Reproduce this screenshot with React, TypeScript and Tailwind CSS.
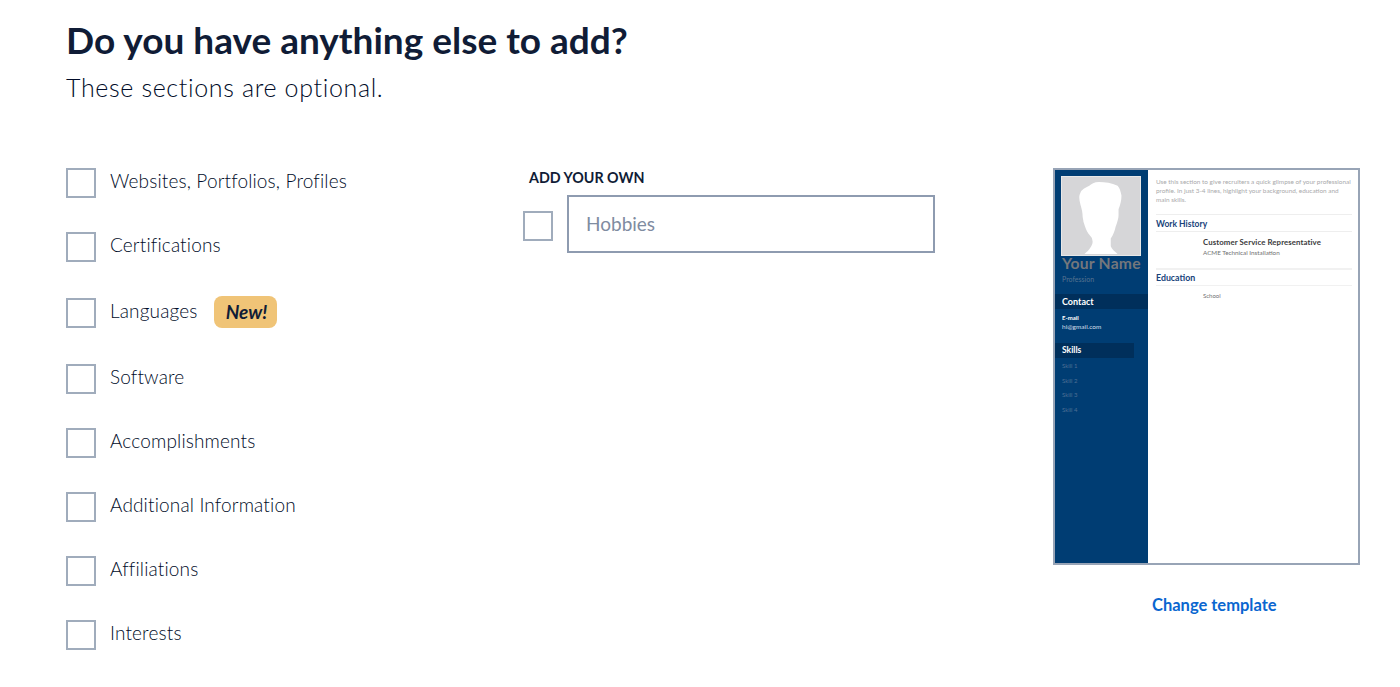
const sections = [
  { label: "Websites, Portfolios, Profiles" },
  { label: "Certifications" },
  { label: "Languages", isNew: true },
  { label: "Software" },
  { label: "Accomplishments" },
  { label: "Additional Information" },
  { label: "Affiliations" },
  { label: "Interests" },
];

function Checkbox() {
  return <div className="w-[30px] h-[30px] shrink-0 border-2 border-[#a0acbc] bg-white" />;
}

function ResumePreview() {
  return (
    <div className="w-[307px] h-[397px] border-2 border-[#98a4b6] flex bg-white font-['Lato',sans-serif] overflow-hidden">
      <div className="w-[93px] shrink-0 bg-[#003d73]">
        <div className="ml-[6px] mt-[6px] w-[80px] h-[80px] bg-[#d6d6d8] border border-[#e8e8e8]">
          <svg viewBox="0 0 80 80" className="w-full h-full">
            <path
              d="M38 5 C33 5 30 7 28 9 C24 11 20 13 19 16 C17 20 18 22 18 24 C19 30 21 34 21 38 C21 42 22 44 22 46 C24 52 25 55 27 58 C29 61 31 62 31 64 C32 67 31 69 30 71 C28 75 25 77 23 79 L57 79 C54 76 51 74 50 71 L50 63 C53 59 54 55 55 51 C57 46 58 42 58 39 L58 33 C60 28 61 24 61 19 C60 14 59 11 57 9 C51 6 44 5 38 5 Z"
              fill="#ffffff"
            />
          </svg>
        </div>
        <div className="ml-[7px] -mt-[2px] text-[15.7px] leading-[19px] font-bold tracking-[0.2px] text-[#74777c] whitespace-nowrap">Your Name</div>
        <div className="ml-[7px] mt-[1px] text-[7px] leading-[10px] text-[#56728f]">Profession</div>
        <div className="mt-[10px] h-[15px] bg-[#002f5b] pl-[7px] text-[9px] leading-[15px] font-bold text-white">Contact</div>
        <div className="ml-[7px] mt-[4px] text-[6px] leading-[9px] font-bold text-white">E-mail</div>
        <div className="ml-[7px] text-[6.5px] leading-[10px] text-[#d5dfe9]">hi@gmail.com</div>
        <div className="mt-[11px] w-[79px] h-[15px] bg-[#002f5b] pl-[7px] text-[8.5px] leading-[15px] font-bold text-white">Skills</div>
        <div className="ml-[7px] mt-[3px] flex flex-col gap-[4.6px] text-[6px] leading-[10px] text-[#4f6f93]">
          <div>Skill 1</div>
          <div>Skill 2</div>
          <div>Skill 3</div>
          <div>Skill 4</div>
        </div>
      </div>
      <div className="flex-1 pl-[8px] pr-[6px] pt-[7px]">
        <div className="text-[6.4px] leading-[9.2px] text-[#a9a9ab] whitespace-nowrap">
          <div>Use this section to give recruiters a quick glimpse of your professional</div>
          <div>profile. In just 3-4 lines, highlight your background, education and</div>
          <div>main skills.</div>
        </div>
        <div className="mt-[9px] border-t border-[#eeeeee] border-b h-[18px] text-[8.5px] leading-[18px] font-bold text-[#17427a]">Work History</div>
        <div className="ml-[47px] mt-[4px] text-[7.8px] leading-[12px] font-bold tracking-[0.1px] text-[#3a3a3c] whitespace-nowrap">Customer Service Representative</div>
        <div className="ml-[47px] text-[6.3px] leading-[10px] text-[#707072] whitespace-nowrap">ACME Technical Installation</div>
        <div className="mt-[10px] border-t-2 border-[#f1f1f1] border-b h-[18px] text-[8.8px] leading-[16px] font-bold text-[#17427a]">Education</div>
        <div className="ml-[47px] mt-[5px] text-[6px] leading-[10px] text-[#707072]">School</div>
      </div>
    </div>
  );
}

export default function App() {
  return (
    <div className="w-[1400px] h-[687px] bg-white overflow-hidden pl-[66px] pt-[15px] font-['Lato',sans-serif] text-[#101c36]">
      <h1 className="text-[37px] leading-[50px] font-bold whitespace-nowrap">Do you have anything else to add?</h1>
      <p className="mt-[4px] text-[25px] leading-[36px] font-light tracking-[0.65px] text-[#000b28]">These sections are optional.</p>

      <div className="flex mt-[63px]">
        <div className="w-[457px] shrink-0 flex flex-col gap-[34px]">
          {sections.map((s) => (
            <div key={s.label} className={`flex items-center ${s.isNew ? "h-[34px]" : "h-[30px]"}`}>
              <Checkbox />
              <span className="ml-[14px] mb-[4px] text-[19px] leading-[26px] font-light tracking-[0.15px] text-[#000b28] whitespace-nowrap">{s.label}</span>
              {s.isNew && (
                <span className="ml-[16px] mb-[2px] h-[32px] w-[63px] pl-[3px] rounded-[8px] bg-[#f0c477] text-center text-[19px] leading-[32px] font-bold italic text-[#101c36]">
                  New!
                </span>
              )}
            </div>
          ))}
        </div>

        <div className="w-[412px] shrink-0">
          <div className="ml-[6px] text-[14.3px] leading-[20px] font-bold text-[#101c36]">ADD YOUR OWN</div>
          <div className="flex items-center mt-[7px]">
            <Checkbox />
            <div className="ml-[14px] mb-[4px] w-[368px] h-[58px] border-2 border-[#8e9bb0] pl-[17px] text-[19px] leading-[54px] text-[#7f8ca1]">Hobbies</div>
          </div>
        </div>

        <div className="ml-[118px] shrink-0">
          <ResumePreview />
          <div className="mt-[29px] pl-[99px] text-[16.5px] leading-[22px] font-bold text-[#0a66d0] whitespace-nowrap">Change template</div>
        </div>
      </div>
    </div>
  );
}
